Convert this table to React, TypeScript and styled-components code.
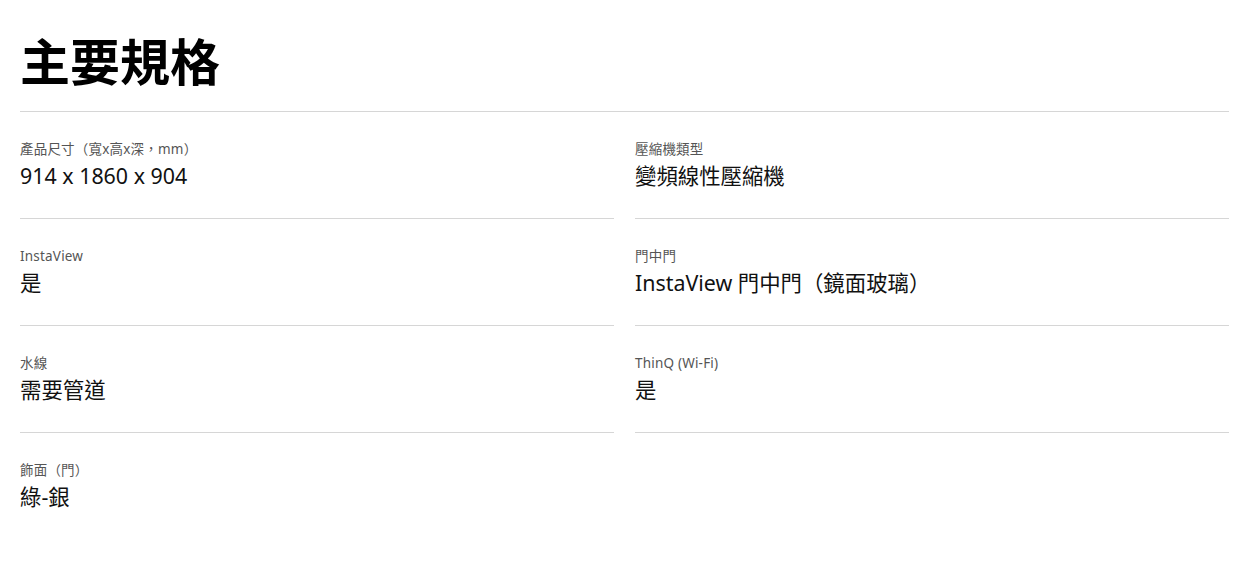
import React from "react";
import styled, { createGlobalStyle } from "styled-components";

const GlobalStyle = createGlobalStyle`
    body {
        margin: 0;
        background: #fff;
        font-family: "Noto Sans", "Noto Sans CJK TC", sans-serif;
    }
`;

const Section = styled.section`
    padding: 0 19px 0 20px;
`;

const Title = styled.h2`
    margin: 0;
    padding: 32px 0 19px;
    font-size: 50px;
    line-height: 60px;
    font-weight: 700;
    color: #000;
    border-bottom: 1px solid #d6d6d6;
`;

const SpecGrid = styled.dl`
    margin: 0;
    display: grid;
    grid-template-columns: 1fr 1fr;
    column-gap: 21px;
`;

const SpecItem = styled.div<{ last?: boolean }>`
    padding: 28px 0 28px;
    border-bottom: ${({ last }) => (last ? "none" : "1px solid #d6d6d6")};
    display: flex;
    flex-direction: column;
    gap: 4px;
`;

const Label = styled.dt`
    font-size: 13.5px;
    line-height: 18px;
    letter-spacing: 0.2px;
    color: #555;
`;

const Value = styled.dd`
    margin: 0;
    font-size: 21.4px;
    line-height: 28px;
    color: #111;
`;

const specs = [
    { label: "產品尺寸（寬x高x深，mm）", value: "914 x 1860 x 904" },
    { label: "壓縮機類型", value: "變頻線性壓縮機" },
    { label: "InstaView", value: "是" },
    { label: "門中門", value: "InstaView 門中門（鏡面玻璃）" },
    { label: "水線", value: "需要管道" },
    { label: "ThinQ (Wi-Fi)", value: "是" },
    { label: "飾面（門）", value: "綠-銀" },
];

const App: React.FC = () => {
    return (
        <>
            <GlobalStyle />
            <Section>
                <Title>主要規格</Title>
                <SpecGrid>
                    {specs.map((s, i) => (
                        <SpecItem key={s.label} last={i === specs.length - 1}>
                            <Label>{s.label}</Label>
                            <Value>{s.value}</Value>
                        </SpecItem>
                    ))}
                </SpecGrid>
            </Section>
        </>
    );
};

export default App;
